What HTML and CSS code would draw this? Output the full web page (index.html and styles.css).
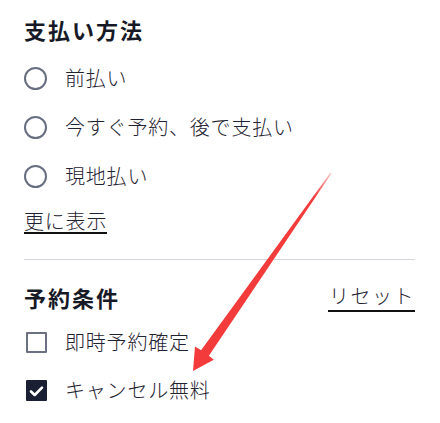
FILE: index.html
```html
<!DOCTYPE html>
<html lang="ja">
<head>
<meta charset="utf-8">
<link rel="stylesheet" href="styles.css">
</head>
<body>
<div class="page">
  <section class="section">
    <h2 class="heading">支払い方法</h2>
    <ul class="options">
      <li class="option"><span class="radio"></span><span class="label">前払い</span></li>
      <li class="option"><span class="radio"></span><span class="label">今すぐ予約、後で支払い</span></li>
      <li class="option"><span class="radio"></span><span class="label">現地払い</span></li>
    </ul>
    <div class="more-row"><a class="link more">更に表示</a></div>
  </section>
  <hr class="divider">
  <section class="section">
    <div class="section-head">
      <h2 class="heading">予約条件</h2>
      <a class="link reset">リセット</a>
    </div>
    <ul class="options checks">
      <li class="option"><span class="checkbox"></span><span class="label">即時予約確定</span></li>
      <li class="option"><span class="checkbox checked"><svg viewBox="0 0 21 21" width="21" height="21"><path d="M5 11.5 L8.7 15 L16 7.6" fill="none" stroke="#fff" stroke-width="2.6" stroke-linecap="round" stroke-linejoin="round"/></svg></span><span class="label">キャンセル無料</span></li>
    </ul>
  </section>
  <svg class="arrow" viewBox="0 0 440 423" width="440" height="423">
    <defs>
      <linearGradient id="fade" x1="331" y1="173" x2="193" y2="371" gradientUnits="userSpaceOnUse">
        <stop offset="0" stop-color="#f33b3b" stop-opacity="0.3"/>
        <stop offset="0.12" stop-color="#f33b3b"/>
        <stop offset="1" stop-color="#f33b3b"/>
      </linearGradient>
    </defs>
    <polygon fill="url(#fade)" points="331.6,173.3 208.9,355.8 213.8,359.8 193,371 195,346.5 201.1,350.3 330.4,172.7"/>
  </svg>
</div>
</body>
</html>
```

FILE: styles.css
```css
* { box-sizing: border-box; }
html, body { margin: 0; padding: 0; background: #ffffff; }
body {
  font-family: "Noto Sans CJK JP", "Noto Sans", sans-serif;
  color: #1d2130;
}
.page {
  position: relative;
  width: 440px;
  height: 423px;
  padding: 14px 25px 0 24px;
  overflow: hidden;
}
.heading {
  margin: 0;
  font-size: 22px;
  line-height: 30px;
  font-weight: 700;
  letter-spacing: 2px;
  color: #171a26;
}
.options {
  list-style: none;
  margin: 9.5px 0 0 0;
  padding: 0;
}
.option {
  display: flex;
  align-items: center;
  height: 49px;
}
.checks .option { height: 48px; }
.radio {
  width: 23px;
  height: 23px;
  border: 2.5px solid #676e80;
  border-radius: 50%;
  flex: none;
}
.checkbox {
  width: 21px;
  height: 21px;
  margin-left: 2px;
  border: 2.5px solid #6b7182;
  border-radius: 1px;
  flex: none;
  display: flex;
  align-items: center;
  justify-content: center;
}
.checkbox.checked {
  background: #1b1f33;
  border-color: #1b1f33;
}
.checkbox svg { flex: none; }
.label {
  margin-left: 18px;
  font-size: 20px;
  line-height: 28px;
  letter-spacing: 0.8px;
  font-weight: 300;
  color: #1f2331;
}
.more-row {
  margin-top: 9.5px;
  height: 24.5px;
}
.link {
  display: inline-block;
  font-size: 20px;
  letter-spacing: 0.8px;
  font-weight: 300;
  color: #1f2331;
  border-bottom: 2.5px solid #111111;
  cursor: pointer;
}
.more {
  line-height: 22px;
}
.divider {
  margin: 24px 0 0 0;
  border: 0;
  height: 1px;
  background: #d5d6dc;
}
.section-head {
  display: flex;
  justify-content: space-between;
  align-items: flex-end;
  margin-top: 22px;
  height: 30px;
}
.reset {
  line-height: 28px;
  padding-left: 1px;
  letter-spacing: 1.5px;
}
.section-head + .options { margin-top: 6.5px; }
.arrow {
  position: absolute;
  left: 0;
  top: 0;
  pointer-events: none;
}
```
